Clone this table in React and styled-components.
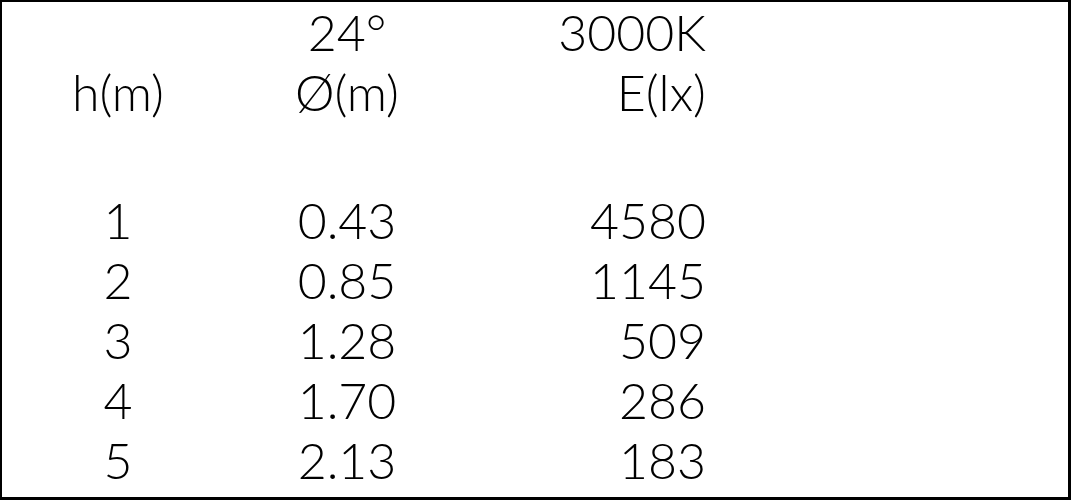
import styled, { createGlobalStyle } from "styled-components";

const GlobalStyle = createGlobalStyle`
  html, body {
    margin: 0;
    padding: 0;
    background: #fff;
  }
`;

const Frame = styled.div`
  box-sizing: border-box;
  width: 1071px;
  height: 500px;
  background: #fff;
  border: 2px solid #000;
  border-right-width: 3px;
  border-bottom-width: 3px;
  font-family: Lato, "Liberation Sans", sans-serif;
  font-weight: 300;
  font-size: 50px;
  color: #000;
  overflow: hidden;
`;

const Row = styled.div`
  display: grid;
  grid-template-columns: 232px 226px 246px;
  height: 60px;
  line-height: 60px;
  white-space: nowrap;
`;

const Body = styled.div`
  margin-top: 68px;
`;

const Cell = styled.div`
  text-align: ${({ align }) => align || "center"};
`;

const header = [
  ["", "24°", "3000K"],
  ["h(m)", "Ø(m)", "E(lx)"],
];

const data = [
  ["1", "0.43", "4580"],
  ["2", "0.85", "1145"],
  ["3", "1.28", "509"],
  ["4", "1.70", "286"],
  ["5", "2.13", "183"],
];

const TableRow = ({ cells }) => (
  <Row>
    <Cell>{cells[0]}</Cell>
    <Cell>{cells[1]}</Cell>
    <Cell align="right">{cells[2]}</Cell>
  </Row>
);

const App = () => {
  return (
    <>
      <GlobalStyle />
      <Frame>
        {header.map((cells, i) => (
          <TableRow key={i} cells={cells} />
        ))}
        <Body>
          {data.map((cells, i) => (
            <TableRow key={i} cells={cells} />
          ))}
        </Body>
      </Frame>
    </>
  );
};

export default App;
